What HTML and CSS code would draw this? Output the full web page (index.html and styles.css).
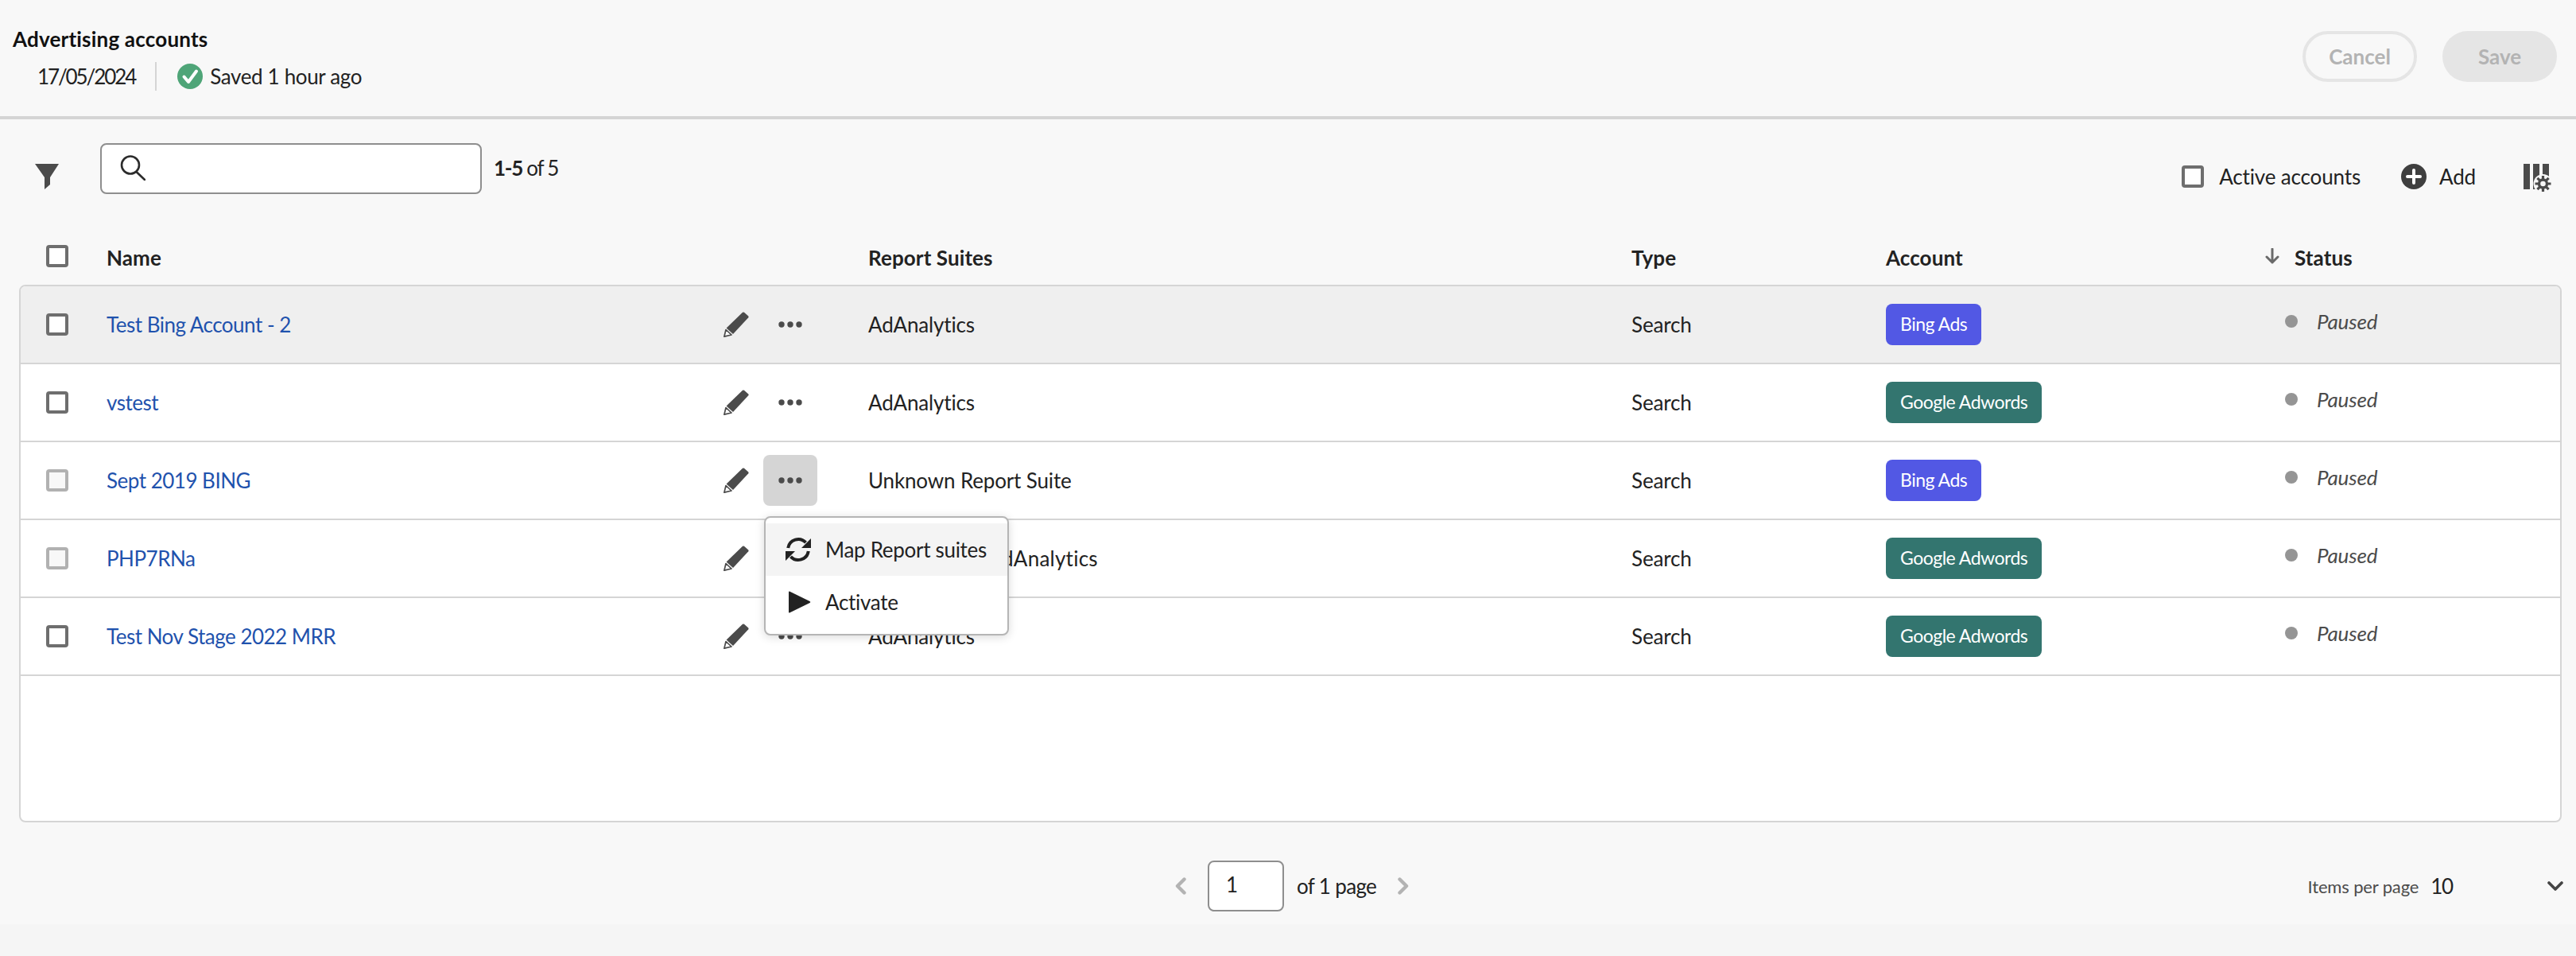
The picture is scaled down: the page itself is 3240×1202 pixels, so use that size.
FILE: index.html
```html
<!DOCTYPE html>
<html lang="en">
<head>
  <meta charset="UTF-8">
  <title>Advertising accounts</title>
  <link rel="stylesheet" href="styles.css">
</head>
<body>
  <svg class="icon-defs" width="0" height="0">
    <symbol id="pencil" viewBox="0 0 32 32">
      <path d="M24 .8Q25 0 26 .8L31.3 5.6Q32 6.4 31.3 7.2L12 28 3.6 20.4Z" fill="#4b4b4b"/>
      <path d="M3 22.5 10 29 .9 31.2Z" fill="#fff" stroke="#4b4b4b" stroke-width="1.7" stroke-linejoin="round"/>
    </symbol>
    <symbol id="dots" viewBox="0 0 30 8">
      <circle cx="4" cy="4" r="3.7" fill="#4b4b4b"/>
      <circle cx="15" cy="4" r="3.7" fill="#4b4b4b"/>
      <circle cx="26" cy="4" r="3.7" fill="#4b4b4b"/>
    </symbol>
  </svg>

  <header class="topbar">
    <div class="topbar-info">
      <h1 class="title">Advertising accounts</h1>
      <div class="saved-line">
        <span class="date">17/05/2024</span>
        <span class="sep"></span>
        <svg class="check-icon" viewBox="0 0 32 32"><circle cx="16" cy="16" r="16" fill="#4fa578"/><path d="M8.5 16.5 14 23 24 9.5" fill="none" stroke="#fff" stroke-width="4" stroke-linecap="round" stroke-linejoin="round"/></svg>
        <span class="saved-text">Saved 1 hour ago</span>
      </div>
    </div>
    <div class="topbar-buttons">
      <button class="btn btn-outline">Cancel</button>
      <button class="btn btn-fill">Save</button>
    </div>
  </header>

  <section class="toolbar">
    <svg class="filter-icon" viewBox="0 0 30 32"><path d="M0 0H30L19 17V26L12 32V17Z" fill="#4b4b4b"/></svg>
    <div class="search">
      <svg class="search-icon" viewBox="0 0 32 32"><circle cx="13" cy="12.5" r="11" fill="none" stroke="#2c2c2c" stroke-width="2.6"/><path d="M20.5 21 31 31" stroke="#2c2c2c" stroke-width="2.6" stroke-linecap="round"/></svg>
    </div>
    <div class="count"><b>1-5</b> of 5</div>
    <div class="toolbar-right">
      <label class="active-filter"><input type="checkbox" class="box box-plain"> Active accounts</label>
      <span class="add">
        <svg class="add-icon" viewBox="0 0 32 32"><circle cx="16" cy="16" r="16" fill="#3f3f3f"/><path d="M16 8V24M8 16H24" stroke="#fff" stroke-width="4" stroke-linecap="round"/></svg>
        Add
      </span>
      <svg class="columns-icon" viewBox="0 0 36 36">
        <path d="M0 0H8V32H0ZM12 0H20V32H12ZM24 0H32V32H24Z" fill="#4b4b4b"/>
        <circle cx="24.5" cy="25" r="12" fill="#f8f8f8"/>
        <circle cx="24.5" cy="25" r="5" fill="none" stroke="#4b4b4b" stroke-width="3.4"/>
        <path d="M24.5 15V19M24.5 31V35M14.5 25H18.5M30.5 25H34.5M17.4 17.9 20.2 20.7M28.8 29.3 31.6 32.1M31.6 17.9 28.8 20.7M20.2 29.3 17.4 32.1" stroke="#4b4b4b" stroke-width="3.2"/>
      </svg>
    </div>
  </section>

  <div class="row head-row">
    <div class="cell-check"><input type="checkbox" class="box box-plain"></div>
    <div>Name</div>
    <div></div>
    <div>Report Suites</div>
    <div>Type</div>
    <div>Account</div>
    <div class="status-head">
      <svg class="sort-icon" viewBox="0 0 18 20"><path d="M9 1V18M2 11 9 18 16 11" fill="none" stroke="#6a6a6a" stroke-width="3" stroke-linecap="round" stroke-linejoin="round"/></svg>
      Status
    </div>
  </div>

  <div class="table">
    <div class="row body-row selected">
      <div class="cell-check"><input type="checkbox" class="box box-plain"></div>
      <a class="name" href="#">Test Bing Account - 2</a>
      <div class="actions">
        <svg class="pencil"><use href="#pencil"/></svg>
        <span class="more"><svg class="dots"><use href="#dots"/></svg></span>
      </div>
      <div>AdAnalytics</div>
      <div>Search</div>
      <div><span class="tag tag-bing">Bing Ads</span></div>
      <div class="status"><span class="dot"></span><i>Paused</i></div>
    </div>

    <div class="row body-row">
      <div class="cell-check"><input type="checkbox" class="box box-plain"></div>
      <a class="name" href="#">vstest</a>
      <div class="actions">
        <svg class="pencil"><use href="#pencil"/></svg>
        <span class="more"><svg class="dots"><use href="#dots"/></svg></span>
      </div>
      <div>AdAnalytics</div>
      <div>Search</div>
      <div><span class="tag tag-google">Google Adwords</span></div>
      <div class="status"><span class="dot"></span><i>Paused</i></div>
    </div>

    <div class="row body-row">
      <div class="cell-check"><input type="checkbox" class="box box-off"></div>
      <a class="name" href="#">Sept 2019 BING</a>
      <div class="actions">
        <svg class="pencil"><use href="#pencil"/></svg>
        <span class="more more-open">
          <svg class="dots"><use href="#dots"/></svg>
          <div class="menu">
            <div class="menu-item hover">
              <svg class="menu-icon" viewBox="0 0 32 32">
                <path d="M3.2 14A13 13 0 0 1 25.5 7.2M28.8 18A13 13 0 0 1 6.5 24.8" fill="none" stroke="#222" stroke-width="4"/>
                <path d="M32 2V14H20ZM0 30V18H12Z" fill="#222"/>
              </svg>
              Map Report suites
            </div>
            <div class="menu-item">
              <svg class="menu-icon" viewBox="0 0 32 32"><path d="M4 3.5Q4 2 5.5 2.7L30.5 15Q32 16 30.5 17L5.5 29.3Q4 30 4 28.5Z" fill="#222"/></svg>
              Activate
            </div>
          </div>
        </span>
      </div>
      <div>Unknown Report Suite</div>
      <div>Search</div>
      <div><span class="tag tag-bing">Bing Ads</span></div>
      <div class="status"><span class="dot"></span><i>Paused</i></div>
    </div>

    <div class="row body-row">
      <div class="cell-check"><input type="checkbox" class="box box-off"></div>
      <a class="name" href="#">PHP7RNa</a>
      <div class="actions">
        <svg class="pencil"><use href="#pencil"/></svg>
        <span class="more"><svg class="dots"><use href="#dots"/></svg></span>
      </div>
      <div class="suite-long">AdAnalytics, AdAnalytics</div>
      <div>Search</div>
      <div><span class="tag tag-google">Google Adwords</span></div>
      <div class="status"><span class="dot"></span><i>Paused</i></div>
    </div>

    <div class="row body-row">
      <div class="cell-check"><input type="checkbox" class="box box-plain"></div>
      <a class="name" href="#">Test Nov Stage 2022 MRR</a>
      <div class="actions">
        <svg class="pencil"><use href="#pencil"/></svg>
        <span class="more"><svg class="dots"><use href="#dots"/></svg></span>
      </div>
      <div>AdAnalytics</div>
      <div>Search</div>
      <div><span class="tag tag-google">Google Adwords</span></div>
      <div class="status"><span class="dot"></span><i>Paused</i></div>
    </div>
  </div>

  <footer class="pager">
    <svg class="chev" viewBox="0 0 14 22"><path d="M11.5 2.5 3 11 11.5 19.5" fill="none" stroke="#b3b3b3" stroke-width="4.4" stroke-linecap="round" stroke-linejoin="round"/></svg>
    <div class="page-input">1</div>
    <span class="page-of">of 1 page</span>
    <svg class="chev" viewBox="0 0 14 22"><path d="M2.5 2.5 11 11 2.5 19.5" fill="none" stroke="#b3b3b3" stroke-width="4.4" stroke-linecap="round" stroke-linejoin="round"/></svg>
    <div class="per-page">
      <span class="per-label">Items per page</span>
      <span class="per-value">10</span>
      <svg class="chev-down" viewBox="0 0 20 12"><path d="M2 2 10 10 18 2" fill="none" stroke="#444" stroke-width="3.6" stroke-linecap="round" stroke-linejoin="round"/></svg>
    </div>
  </footer>
  <div class="bottom-band"></div>
</body>
</html>
```

FILE: styles.css
```css
* {
  box-sizing: border-box;
}
body {
  margin: 0;
  background-color: #f8f8f8;
  font-family: 'Lato', 'Open Sans', sans-serif;
  font-size: 26px;
  letter-spacing: -0.15px;
  color: #222;
}
.icon-defs {
  position: absolute;
}

/* top bar */
.topbar {
  height: 150px;
  border-bottom: 4px solid #d5d5d5;
  display: flex;
  justify-content: space-between;
  padding: 31px 24px 0 16px;
}
.title {
  margin: 0;
  font-size: 26px;
  line-height: 36px;
  font-weight: 700;
  letter-spacing: 0.2px;
  color: #111;
}
.saved-line {
  display: flex;
  align-items: center;
  height: 36px;
  margin-top: 11px;
  padding-left: 31px;
}
.date {
  letter-spacing: -2.1px;
}
.sep {
  width: 2px;
  height: 36px;
  background: #d5d5d5;
  margin: 0 26px 0 25px;
}
.check-icon {
  width: 32px;
  height: 32px;
  margin-right: 9px;
}
.saved-text {
  letter-spacing: -0.35px;
}
.topbar-buttons {
  display: flex;
  gap: 32px;
  padding-top: 8px;
}
.btn {
  width: 144px;
  height: 64px;
  border-radius: 32px;
  font-family: inherit;
  font-size: 26px;
  font-weight: 700;
  color: #b3b3b3;
}
.btn-outline {
  background: none;
  border: 4px solid #e5e5e5;
}
.btn-fill {
  background: #e5e5e5;
  border: none;
}

/* search and filters */
.toolbar {
  height: 140px;
  display: flex;
  align-items: flex-start;
  padding: 30px 18px 0 44px;
}
.filter-icon {
  width: 30px;
  height: 32px;
  margin-top: 26px;
}
.search {
  width: 480px;
  height: 64px;
  margin-left: 52px;
  background: #fff;
  border: 2px solid #8e8e8e;
  border-radius: 8px;
  padding: 13px 0 0 23px;
}
.search-icon {
  display: block;
  width: 32px;
  height: 32px;
}
.count {
  margin-left: 15px;
  line-height: 62px;
  letter-spacing: -1.3px;
}
.toolbar-right {
  margin-left: auto;
  display: flex;
  align-items: center;
  height: 84px;
}
.active-filter {
  display: flex;
  align-items: center;
  gap: 19px;
}
.add {
  display: flex;
  align-items: center;
  gap: 16px;
  margin-left: 51px;
}
.add-icon {
  width: 32px;
  height: 32px;
}
.columns-icon {
  width: 36px;
  height: 36px;
  margin: 4px 12px 0 60px;
}

/* table */
.row {
  display: grid;
  grid-template-columns: 108px 776px 182px 960px 320px 477px 1fr;
  align-items: center;
}
.cell-check {
  padding-left: 32px;
  display: flex;
}
.box {
  appearance: none;
  margin: 0;
  width: 28px;
  height: 28px;
  border: 4px solid #6e6e6e;
  border-radius: 4px;
  background: #fff;
}
.box-off {
  border-color: #b1b1b1;
  background: #f8f8f8;
}
.head-row {
  height: 68px;
  margin-left: 26px;
  font-weight: 700;
  letter-spacing: 0.1px;
}
.head-row .box {
  margin-top: -4px;
}
.status-head {
  display: flex;
  align-items: center;
  gap: 19px;
}
.sort-icon {
  width: 18px;
  height: 20px;
  margin-top: -4px;
}
.table {
  height: 676px;
  margin: 0 18px 0 24px;
  background: #fff;
  border: 2px solid #d5d5d5;
  border-radius: 8px;
}
.body-row {
  height: 98px;
  border-bottom: 2px solid #d5d5d5;
}
.selected {
  background: #efefef;
  border-radius: 6px 6px 0 0;
}
.name {
  color: #1f52ad;
  text-decoration: none;
  letter-spacing: -0.5px;
}
.actions {
  display: flex;
  align-items: center;
  gap: 18px;
}
.pencil {
  width: 32px;
  height: 32px;
}
.more {
  position: relative;
  width: 68px;
  height: 64px;
  border-radius: 8px;
  display: flex;
  align-items: center;
  justify-content: center;
}
.more-open {
  background: #d5d5d5;
}
.dots {
  width: 30px;
  height: 8px;
}
.menu {
  position: absolute;
  top: 77px;
  left: 1px;
  z-index: 2;
  width: 308px;
  height: 150px;
  padding-top: 7px;
  background: #fff;
  border: 2px solid #b5b5b5;
  border-radius: 8px;
  box-shadow: 0 2px 12px rgba(0,0,0,0.15);
}
.menu-item {
  height: 66px;
  display: flex;
  align-items: center;
  gap: 18px;
  padding-left: 25px;
  letter-spacing: -0.3px;
}
.menu-item.hover {
  background: #f4f4f4;
}
.menu-icon {
  width: 32px;
  height: 32px;
}
.suite-long {
  letter-spacing: 0.25px;
}
.tag {
  display: inline-block;
  height: 52px;
  line-height: 50px;
  padding: 0 18px;
  border-radius: 8px;
  color: #fff;
  font-size: 23px;
  letter-spacing: -0.5px;
}
.tag-bing {
  background: #5258e4;
}
.tag-google {
  background: #33756f;
}
.status {
  display: flex;
  align-items: center;
  padding-left: 25px;
  margin-top: -8px;
  color: #4b4b4b;
}
.dot {
  width: 16px;
  height: 16px;
  border-radius: 50%;
  background: #959595;
  margin-right: 24px;
}

/* pagination */
.pager {
  height: 128px;
  display: flex;
  align-items: flex-start;
  padding: 48px 16px 0 1478px;
}
.chev {
  width: 14px;
  height: 22px;
  margin-top: 21px;
}
.page-input {
  width: 96px;
  height: 64px;
  margin: 0 16px 0 27px;
  padding-left: 21px;
  background: #fff;
  border: 2px solid #8e8e8e;
  border-radius: 8px;
  line-height: 56px;
}
.page-of {
  line-height: 64px;
  margin-right: 27px;
  letter-spacing: -0.65px;
}
.per-page {
  margin-left: auto;
  display: flex;
  align-items: center;
  height: 64px;
}
.per-label {
  font-size: 22px;
  color: #4b4b4b;
}
.per-value {
  margin: 0 119px 0 15px;
  letter-spacing: -1.2px;
}
.chev-down {
  width: 20px;
  height: 12px;
}
.bottom-band {
  height: 40px;
  background: #f5f5f5;
}
```
